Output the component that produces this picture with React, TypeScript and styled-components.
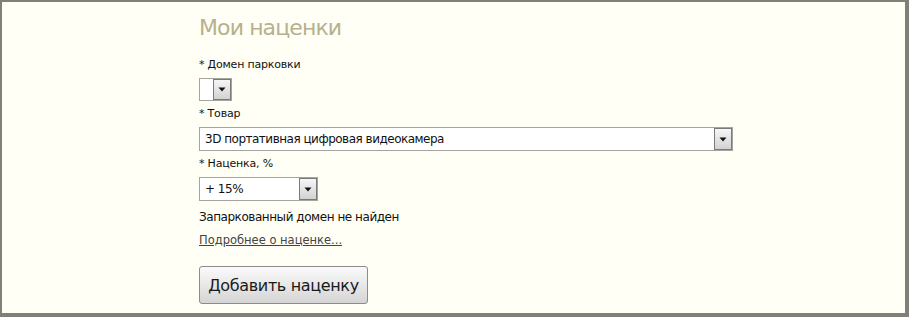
import React from "react";
import styled, { createGlobalStyle } from "styled-components";

const Global = createGlobalStyle`
  html, body { margin: 0; padding: 0; }
  body {
    background: #fffff5;
    font-family: "DejaVu Sans", Verdana, sans-serif;
    color: #111;
  }
`;

const Frame = styled.div`
  box-sizing: border-box;
  width: 909px;
  height: 317px;
  border-style: solid;
  border-color: #807f78;
  border-width: 2px 4px 4px 2px;
  background: #fffff5;
  overflow: hidden;
`;

const Content = styled.div`
  margin-left: 197px;
  padding-top: 12px;
  display: flex;
  flex-direction: column;
  align-items: flex-start;
`;

const Title = styled.h1`
  margin: 0 0 16px;
  font-family: "DejaVu Sans", Verdana, sans-serif;
  font-weight: normal;
  font-size: 22px;
  letter-spacing: -0.9px;
  line-height: 28px;
  color: #b8b08d;
`;

const Label = styled.div`
  font-size: 11px;
  letter-spacing: -0.2px;
  line-height: 14px;
  margin-bottom: 6px;
`;

const SelectBox = styled.div<{ $width: number; $height: number }>`
  box-sizing: border-box;
  width: ${(p) => p.$width}px;
  height: ${(p) => p.$height}px;
  border: 1px solid #a5a5a0;
  background: #fff;
  display: flex;
  align-items: stretch;
  margin-bottom: 6px;
`;

const SelectValue = styled.div`
  flex: 1;
  padding-left: 5px;
  display: flex;
  align-items: center;
  font-size: 12px;
  letter-spacing: -0.5px;
  color: #111;
  white-space: nowrap;
  overflow: hidden;
`;

const ArrowButton = styled.div`
  box-sizing: border-box;
  width: 18px;
  border: 1px solid #7a7a78;
  background: linear-gradient(#f6f6f6, #d2d2d2);
  display: flex;
  align-items: center;
  justify-content: center;
`;

const Note = styled.div`
  font-size: 12px;
  letter-spacing: -0.45px;
  line-height: 15px;
  margin-top: 3px;
  margin-bottom: 8px;
`;

const MoreLink = styled.a`
  font-size: 11.5px;
  line-height: 15px;
  color: #444;
  text-decoration: underline;
  cursor: pointer;
`;

const AddButton = styled.button`
  margin-top: 18px;
  box-sizing: border-box;
  width: 169px;
  height: 38px;
  border: 1px solid #8c8c88;
  border-radius: 3px;
  background: linear-gradient(#fafafa, #e8e8e8 50%, #d4d4d4);
  font-family: "DejaVu Sans", Verdana, sans-serif;
  font-size: 16px;
  letter-spacing: -0.35px;
  color: #1a1a1a;
  padding: 0;
  cursor: pointer;
`;

const Arrow = () => (
  <svg width="8" height="5" viewBox="0 0 8 5">
    <path d="M0.5 0.5 H7.5 L4 4.5 Z" fill="#111" />
  </svg>
);

const Select = ({ width, height, value }: { width: number; height: number; value?: string }) => (
  <SelectBox $width={width} $height={height}>
    <SelectValue>{value}</SelectValue>
    <ArrowButton>
      <Arrow />
    </ArrowButton>
  </SelectBox>
);

export default function App() {
  return (
    <>
      <Global />
      <Frame>
        <Content>
          <Title>Мои наценки</Title>
          <Label>* Домен парковки</Label>
          <Select width={33} height={23} />
          <Label>* Товар</Label>
          <Select width={534} height={24} value="3D портативная цифровая видеокамера" />
          <Label>* Наценка, %</Label>
          <Select width={119} height={24} value="+ 15%" />
          <Note>Запаркованный домен не найден</Note>
          <MoreLink>Подробнее о наценке...</MoreLink>
          <AddButton>Добавить наценку</AddButton>
        </Content>
      </Frame>
    </>
  );
}
